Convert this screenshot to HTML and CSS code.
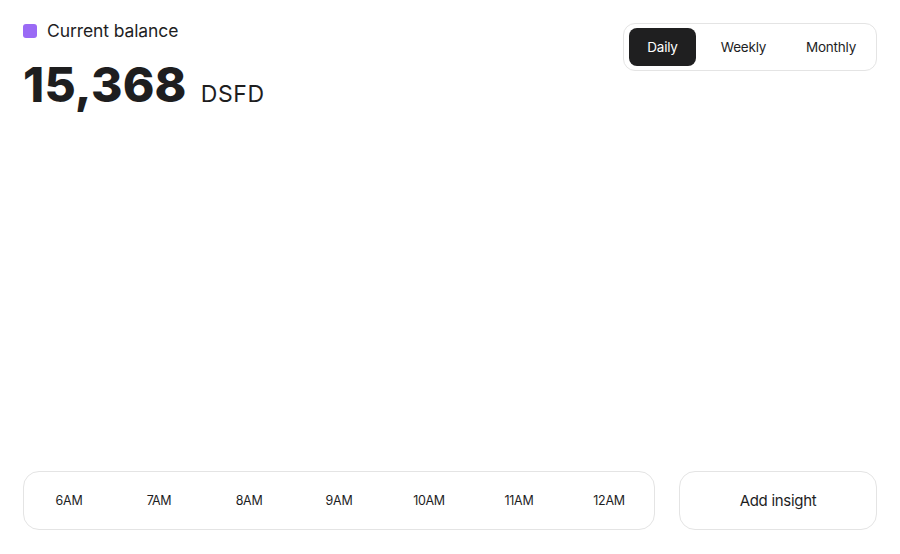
FILE: index.html
```html
<!DOCTYPE html>
<html lang="en">
<head>
<meta charset="utf-8">
<title>Current balance</title>
<link rel="stylesheet" href="styles.css">
</head>
<body>
<div class="page">
  <header class="top">
    <div class="balance">
      <div class="label"><span class="dot"></span><span>Current balance</span></div>
      <div class="amount"><span class="num">15,368</span><span class="cur">DSFD</span></div>
    </div>
    <div class="seg">
      <button class="seg-btn active">Daily</button>
      <button class="seg-btn">Weekly</button>
      <button class="seg-btn">Monthly</button>
    </div>
  </header>
  <div class="chart"></div>
  <footer class="bottom">
    <div class="times">
      <span>6AM</span><span>7AM</span><span>8AM</span><span>9AM</span><span>10AM</span><span>11AM</span><span>12AM</span>
    </div>
    <button class="insight">Add insight</button>
  </footer>
</div>
</body>
</html>
```
FILE: styles.css
```css
* { box-sizing: border-box; }
html, body { margin: 0; padding: 0; background: #fff; }
body {
  font-family: Inter, "Noto Sans", sans-serif;
  color: #1e1e1f;
}
.page {
  width: 900px;
  height: 554px;
  padding: 20px 23px 24px 23px;
  display: flex;
  flex-direction: column;
}
.top {
  display: flex;
  justify-content: space-between;
  align-items: flex-start;
}
.balance { display: flex; flex-direction: column; }
.label {
  display: flex;
  align-items: center;
  gap: 10px;
  font-size: 17.5px;
  letter-spacing: -0.1px;
  line-height: 22px;
}
.dot {
  width: 14px;
  height: 14px;
  border-radius: 3px;
  background: #9a6af5;
}
.amount {
  display: flex;
  align-items: baseline;
  gap: 14px;
  margin-top: 19px;
}
.num {
  font-size: 48px;
  font-weight: 800;
  letter-spacing: 0.2px;
  line-height: 48px;
}
.cur {
  font-size: 23px;
  letter-spacing: 0.6px;
}
.seg {
  margin-top: 3px;
  display: flex;
  align-items: center;
  border: 1px solid #e4e4e4;
  border-radius: 12px;
  padding: 4px 5px;
  width: 254px;
  height: 48px;
}
.seg-btn {
  font-family: inherit;
  border: 0;
  background: transparent;
  font-size: 13.5px;
  letter-spacing: -0.2px;
  color: #1e1e1f;
  height: 38px;
  border-radius: 8px;
  padding: 0;
  width: 67px;
}
.seg-btn:nth-child(2) { width: 95px; }
.seg-btn:nth-child(3) { width: 80px; }
.seg-btn.active { background: #1f1f20; color: #fff; }
.chart { flex: 1; }
.bottom {
  display: flex;
  gap: 24px;
  height: 59px;
}
.times {
  width: 632px;
  border: 1px solid #e4e4e4;
  border-radius: 16px;
  display: flex;
  align-items: center;
}
.times span {
  flex: 1;
  text-align: center;
  font-size: 12.5px;
  letter-spacing: -0.3px;
}
.insight {
  flex: 1;
  font-family: inherit;
  background: #fff;
  border: 1px solid #e4e4e4;
  border-radius: 16px;
  font-size: 15px;
  letter-spacing: -0.3px;
  color: #1e1e1f;
}
```
